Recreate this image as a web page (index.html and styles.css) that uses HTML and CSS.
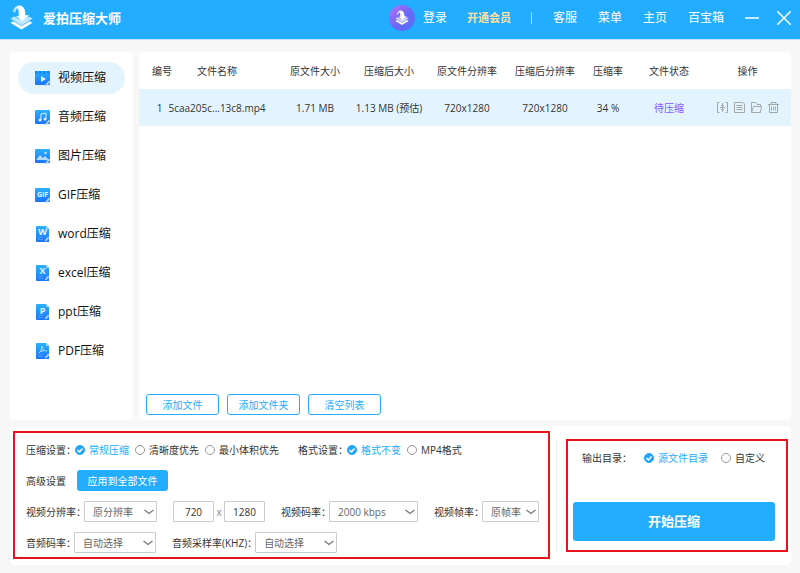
FILE: index.html
```html
<!DOCTYPE html>
<html lang="zh-CN">
<head>
    <meta charset="UTF-8">
    <meta name="viewport" content="width=device-width, initial-scale=1.0">
    <title>爱拍压缩大师</title>
    <link rel="stylesheet" href="styles.css">
</head>
<body>
    <!-- gradients shared by the icons -->
    <svg class="defs" width="0" height="0" aria-hidden="true">
        <defs>
            <linearGradient id="blue" x1="0" y1="0" x2="0" y2="1">
                <stop offset="0" stop-color="#2bb2fb"/>
                <stop offset="1" stop-color="#1b74fb"/>
            </linearGradient>
            <linearGradient id="purple" x1="0" y1="0" x2="1" y2="1">
                <stop offset="0" stop-color="#b673fb"/>
                <stop offset="0.5" stop-color="#6f68f5"/>
                <stop offset="1" stop-color="#4a72f8"/>
            </linearGradient>
            <linearGradient id="fade" x1="0" y1="0" x2="1" y2="0">
                <stop offset="0" stop-color="#fff" stop-opacity="0.55"/>
                <stop offset="0.5" stop-color="#fff"/>
            </linearGradient>
            <symbol id="logo" viewBox="0 0 24 26">
                <path d="M0.500 18L12 25l11.500-7-3-1.500-8.500 5-8.500-5z" fill="#fff"/>
                <path d="M0.500 13.500l11.500 7.500 11.500-7.500-4-2-7.500 4-7.500-4z" fill="#fff" opacity="0.7"/>
                <path d="M3 7c0-4 3-6 5-7h3c3 1 5 4 5 8v2h4l-7.500 6.500L6 11h3c0-4 0-7-1.500-8C6 4 6 5 6 7z" fill="url(#fade)"/>
            </symbol>
            <symbol id="square" viewBox="0 0 16 16">
                <rect x="0" y="1" width="15" height="14" rx="1" fill="url(#blue)"/>
                <path d="M9.500 15.500L14 10.500l1.500 1.500-4 4z" fill="#a9cffd"/>
            </symbol>
            <symbol id="page" viewBox="0 0 16 16">
                <path d="M2 0h9l3 3v13H2a1 1 0 0 1-1-1V1a1 1 0 0 1 1-1z" fill="url(#blue)"/>
                <path d="M11 0l3 3h-3z" fill="#8fd0fd"/>
                <path d="M3 11.500h5M3 13.500h5" stroke="#4a98fd"/>
                <path d="M9.500 14.500l3.500-4 1.500 1.500-3.500 3.500z" fill="#9cc8fd"/>
            </symbol>
        </defs>
    </svg>

    <header class="header">
        <svg class="header-logo"><use href="#logo"/></svg>
        <h1>爱拍压缩大师</h1>
        <nav class="nav">
            <div class="user">
                <svg class="avatar" viewBox="0 0 26 26">
                    <circle cx="13" cy="13" r="13" fill="url(#purple)"/>
                    <use href="#logo" x="6" y="5" width="14" height="16"/>
                </svg>
                <a href="#">登录</a>
                <a href="#" class="vip">开通会员</a>
                <span class="separator"></span>
            </div>
            <a href="#">客服</a>
            <a href="#">菜单</a>
            <a href="#">主页</a>
            <a href="#">百宝箱</a>
            <div class="window-buttons">
                <button type="button" aria-label="最小化"><svg viewBox="0 0 14 14"><path d="M0 7h14" stroke="#fff" stroke-width="1.500"/></svg></button>
                <button type="button" aria-label="关闭"><svg viewBox="0 0 14 14"><path d="M0 0l14 14M14 0L0 14" stroke="#fff" stroke-width="1.500"/></svg></button>
            </div>
        </nav>
    </header>

    <main class="main">
        <div class="workspace">
            <aside class="sidebar">
                <ul class="menu">
                    <li><a href="#" class="active">
                        <svg viewBox="0 0 16 16"><use href="#square"/><path d="M0 1h2.500v3H0zM4 1h2.500v3H4zM8 1h2.500v3H8zM12 1h3v3h-3z" fill="#1389f5"/><path d="M6 6l5 3-5 3z" fill="#dff1ff"/></svg>
                        视频压缩</a></li>
                    <li><a href="#">
                        <svg viewBox="0 0 16 16"><use href="#square"/><path d="M6 11V5l5-1v6" fill="none" stroke="#dff1ff"/><circle cx="5" cy="11" r="1.500" fill="#dff1ff"/><circle cx="10" cy="10" r="1.500" fill="#dff1ff"/></svg>
                        音频压缩</a></li>
                    <li><a href="#">
                        <svg viewBox="0 0 16 16"><use href="#square"/><path d="M1 12l4-5 3 3 2-2 4 4z" fill="#b5dcff"/><circle cx="10.500" cy="5" r="1.300" fill="#b5dcff"/></svg>
                        图片压缩</a></li>
                    <li><a href="#">
                        <svg viewBox="0 0 16 16"><use href="#square"/><text x="7.500" y="10" class="mark mark-gif">GIF</text></svg>
                        GIF压缩</a></li>
                    <li><a href="#">
                        <svg viewBox="0 0 16 16"><use href="#page"/><text x="7.500" y="9" class="mark">W</text></svg>
                        word压缩</a></li>
                    <li><a href="#">
                        <svg viewBox="0 0 16 16"><use href="#page"/><text x="7.500" y="9" class="mark">X</text></svg>
                        excel压缩</a></li>
                    <li><a href="#">
                        <svg viewBox="0 0 16 16"><use href="#page"/><text x="7.500" y="10" class="mark">P</text></svg>
                        ppt压缩</a></li>
                    <li><a href="#">
                        <svg viewBox="0 0 16 16"><use href="#page"/><path d="M7 3c0 3-1 5-3 7M7 3c0 3 2 5 5 5M5.500 8.500L9 7.500" fill="none" stroke="#a9dcff"/></svg>
                        PDF压缩</a></li>
                </ul>
            </aside>

            <section class="files">
                <table class="file-table">
                    <colgroup>
                        <col class="col-index">
                        <col>
                        <col class="col-size">
                        <col class="col-size">
                        <col class="col-source">
                        <col class="col-size">
                        <col class="col-ratio">
                        <col class="col-state">
                        <col class="col-actions">
                    </colgroup>
                    <thead>
                        <tr>
                            <th>编号</th>
                            <th>文件名称</th>
                            <th>原文件大小</th>
                            <th>压缩后大小</th>
                            <th>原文件分辨率</th>
                            <th>压缩后分辨率</th>
                            <th>压缩率</th>
                            <th>文件状态</th>
                            <th>操作</th>
                        </tr>
                    </thead>
                    <tbody>
                        <tr>
                            <td>1</td>
                            <td>5caa205c...13c8.mp4</td>
                            <td>1.71 MB</td>
                            <td>1.13 MB (预估)</td>
                            <td>720x1280</td>
                            <td>720x1280</td>
                            <td>34 %</td>
                            <td class="state">待压缩</td>
                            <td>
                                <div class="actions">
                                    <button type="button" aria-label="压缩"><svg viewBox="0 0 11 11"><path d="M2.500 .5H.5v10h2M8.500 .5h2v10h-2M5.500 1v3.500M5.500 10V6.500M3 5.500h5M4 3l1.500 1.500L7 3M4 8l1.500-1.500L7 8"/></svg></button>
                                    <button type="button" aria-label="详情"><svg viewBox="0 0 11 11"><path d="M.5.5H9L10.500 2v8.500H.5zM2.500 3.500h6M2.500 5.500h6M2.500 7.500h6"/></svg></button>
                                    <button type="button" aria-label="打开文件夹"><svg viewBox="0 0 11 11"><path d="M.5 10.500V.5h4L6 2.500h3.500v2M.5 10.500l2-6h8l-1 6z"/></svg></button>
                                    <button type="button" aria-label="删除"><svg viewBox="0 0 11 11"><path d="M0 2.500h11M3 2.500v-2h5v2M1.500 2.500v8h8v-8M3.500 4.500v4M5.500 4.500v4M7.500 4.500v4"/></svg></button>
                                </div>
                            </td>
                        </tr>
                    </tbody>
                </table>
                <div class="file-buttons">
                    <button type="button">添加文件</button>
                    <button type="button">添加文件夹</button>
                    <button type="button">清空列表</button>
                </div>
            </section>
        </div>

        <form class="panel">
            <section class="settings">
                <div class="row">
                    <div class="radios">
                        <span class="label">压缩设置：</span>
                        <label><input type="radio" name="mode" checked><span>常规压缩</span></label>
                        <label><input type="radio" name="mode"><span>清晰度优先</span></label>
                        <label><input type="radio" name="mode"><span>最小体积优先</span></label>
                    </div>
                    <div class="radios">
                        <span class="label">格式设置：</span>
                        <label><input type="radio" name="format" checked><span>格式不变</span></label>
                        <label><input type="radio" name="format"><span>MP4格式</span></label>
                    </div>
                </div>
                <div class="row row-advanced">
                    <span>高级设置</span>
                    <button type="button" class="apply">应用到全部文件</button>
                </div>
                <div class="row">
                    <div class="field">
                        <label class="label" for="resolution">视频分辨率：</label>
                        <select id="resolution" class="w-resolution"><option>原分辨率</option></select>
                    </div>
                    <div class="field">
                        <input type="text" value="720" aria-label="宽度">
                        <span class="times">x</span>
                        <input type="text" value="1280" aria-label="高度">
                    </div>
                    <div class="field">
                        <label class="label" for="bitrate">视频码率：</label>
                        <select id="bitrate" class="w-bitrate"><option>2000 kbps</option></select>
                    </div>
                    <div class="field">
                        <label class="label" for="fps">视频帧率：</label>
                        <select id="fps" class="w-fps"><option>原帧率</option></select>
                    </div>
                </div>
                <div class="row">
                    <div class="field">
                        <label class="label" for="audio-bitrate">音频码率：</label>
                        <select id="audio-bitrate" class="w-audio"><option>自动选择</option></select>
                    </div>
                    <div class="field">
                        <label class="label" for="sample-rate">音频采样率(KHZ)：</label>
                        <select id="sample-rate" class="w-audio"><option>自动选择</option></select>
                    </div>
                </div>
            </section>

            <section class="output">
                <div class="radios">
                    <span class="label">输出目录：</span>
                    <label><input type="radio" name="output" checked><span>源文件目录</span></label>
                    <label><input type="radio" name="output"><span>自定义</span></label>
                </div>
                <button type="button" class="start">开始压缩</button>
            </section>
        </form>
    </main>
</body>
</html>
```
FILE: styles.css
```css
* {
    box-sizing: border-box;
}

body {
    margin: 0;
    min-height: 100vh;
    display: flex;
    flex-direction: column;
    background-color: #f7f7f7;
    color: #333;
    font-family: "Open Sans", "Noto Sans CJK SC", sans-serif;
    font-size: 10px;
    line-height: 16px;
}

.defs {
    position: absolute;
}

a {
    color: inherit;
    text-decoration: none;
}

button,
input,
select {
    font: inherit;
    color: inherit;
    margin: 0;
}

button {
    padding: 0;
    border: none;
    background: none;
    cursor: pointer;
}

/* header */
.header {
    display: flex;
    align-items: center;
    height: 40px;
    padding: 0 9px 3px 10px;
    background-color: #22adff;
    border-bottom: 1px solid #c4e7fd;
    color: #fff;
}

.header-logo {
    width: 23px;
    height: 26px;
    margin-right: 10px;
}

.header h1 {
    margin: 0;
    font-size: 13px;
    font-weight: bold;
}

.nav {
    display: flex;
    align-items: center;
    gap: 21px;
    margin-left: auto;
    font-size: 12px;
}

.user {
    display: flex;
    align-items: center;
    gap: 20px;
}

.avatar {
    width: 26px;
    height: 26px;
    margin-right: -12px;
}

.vip {
    color: #ffe0a0;
    font-size: 11px;
    font-weight: bold;
}

.separator {
    width: 1px;
    height: 12px;
    background-color: #a6dcff;
}

.window-buttons {
    display: flex;
    gap: 18px;
}

.window-buttons svg {
    display: block;
    width: 14px;
    height: 14px;
}

/* main area */
.main {
    flex: 1;
    display: flex;
    flex-direction: column;
    gap: 6px;
    padding: 12px 9px 8px 10px;
}

.workspace {
    flex: 1;
    display: flex;
    gap: 6px;
}

.sidebar,
.files,
.panel {
    background-color: #fff;
    border-radius: 4px;
}

.sidebar {
    flex: 0 0 123px;
    padding: 10px 8px;
}

.menu {
    display: flex;
    flex-direction: column;
    justify-content: space-between;
    height: 305px;
    margin: 0;
    padding: 0;
    list-style: none;
}

.menu a {
    display: flex;
    align-items: center;
    gap: 7px;
    height: 32px;
    padding-left: 17px;
    border-radius: 16px;
    color: #111;
    font-size: 12px;
}

.menu a.active {
    background-color: #e3f4ff;
}

.menu svg {
    width: 16px;
    height: 16px;
}

.mark {
    fill: #e3f4ff;
    font-size: 9px;
    font-weight: bold;
    text-anchor: middle;
}

.mark-gif {
    font-size: 7px;
}

/* file list */
.files {
    flex: 1;
    min-width: 0;
    display: flex;
    flex-direction: column;
    justify-content: space-between;
}

.file-table {
    width: 100%;
    table-layout: fixed;
    border-collapse: collapse;
    text-align: center;
    white-space: nowrap;
}

.col-index { width: 29px; }
.col-size { width: 74px; }
.col-source { width: 82px; }
.col-ratio { width: 52px; }
.col-state { width: 70px; }
.col-actions { width: 87px; }

.file-table th,
.file-table td {
    height: 37px;
    padding: 0;
    font-weight: normal;
}

.file-table th:first-child {
    padding-left: 13px;
    text-align: left;
}

.file-table td:first-child {
    padding-left: 12px;
}

.file-table th:nth-child(2),
.file-table td:nth-child(2) {
    padding-right: 12px;
}

.file-table tbody tr {
    background-color: #e3f4ff;
}

.state {
    color: #8457ff;
}

.actions {
    display: flex;
    justify-content: center;
    gap: 6px;
}

.actions svg {
    display: block;
    width: 11px;
    height: 11px;
    fill: none;
    stroke: #a3a8ab;
}

.file-buttons {
    display: flex;
    gap: 8px;
    padding: 0 7px 5px;
}

.file-buttons button {
    width: 73px;
    height: 21px;
    border: 1px solid #22adff;
    border-radius: 3px;
    color: #22adff;
}

/* bottom panel */
.panel {
    display: flex;
    align-items: center;
    justify-content: space-between;
    padding: 5px 3px 6px;
}

.settings,
.output {
    border: 2px solid #e8141c;
}

.settings {
    flex: 1;
    display: flex;
    flex-direction: column;
    gap: 10px;
    padding: 6px 8px 4px 11px;
}

.row {
    display: flex;
    align-items: center;
    gap: 16px;
    height: 21px;
    white-space: nowrap;
}

.row-advanced {
    gap: 11px;
}

.label {
    margin-right: -2px;
}

.radios .label {
    margin-right: -1px;
}

.radios,
.radios label,
.field {
    display: flex;
    align-items: center;
}

.radios label {
    gap: 4px;
}

.radios label + label {
    margin-left: 6px;
}

.radios + .radios {
    margin-left: 3px;
}

input[type="radio"] {
    appearance: none;
    width: 10px;
    height: 10px;
    border: 1px solid #999;
    border-radius: 50%;
    background-color: #fff;
}

input[type="radio"]:checked {
    border-color: #22a5f7;
    background: #22a5f7 url("data:image/svg+xml,%3Csvg xmlns='http://www.w3.org/2000/svg' viewBox='0 0 8 8'%3E%3Cpath d='M1.500 4l2 2 3-3.500' fill='none' stroke='white' stroke-width='1.500'/%3E%3C/svg%3E");
}

input[type="radio"]:checked + span {
    color: #22adff;
}

.apply {
    width: 91px;
    height: 21px;
    border-radius: 3px;
    background-color: #22adff;
    color: #fff;
}

select,
input[type="text"] {
    height: 21px;
    border: 1px solid #ccc;
    border-radius: 1px;
    background-color: #fff;
}

select {
    appearance: none;
    padding: 0 0 0 8px;
    color: #666;
    background-image: url("data:image/svg+xml,%3Csvg xmlns='http://www.w3.org/2000/svg' viewBox='0 0 10 6'%3E%3Cpath d='M.5 1L5 4.500 9.500 1' fill='none' stroke='%23777' stroke-width='1.300'/%3E%3C/svg%3E");
    background-repeat: no-repeat;
    background-position: right 2px center;
    background-size: 10px 6px;
}

input[type="text"] {
    width: 41px;
    padding: 0;
    text-align: center;
}

.times {
    width: 10px;
    color: #888;
    text-align: center;
}

.w-resolution { width: 73px; }
.w-bitrate { width: 89px; }
.w-fps { width: 57px; }
.w-audio { width: 82px; }

.output {
    position: relative;
    flex: 0 0 222px;
    display: flex;
    flex-direction: column;
    gap: 36px;
    margin-left: 16px;
    padding: 9px 11px 9px 5px;
}

/* line between the two halves of the panel */
.output::before {
    content: "";
    position: absolute;
    top: -2px;
    bottom: -2px;
    left: -12px;
    width: 1px;
    background-color: #eee;
}

.output .radios {
    padding-left: 9px;
}

.output .radios label {
    margin-left: 13px;
}

.start {
    height: 39px;
    border-radius: 3px;
    background-color: #22adff;
    color: #fff;
    font-size: 13px;
    font-weight: bold;
}
```
